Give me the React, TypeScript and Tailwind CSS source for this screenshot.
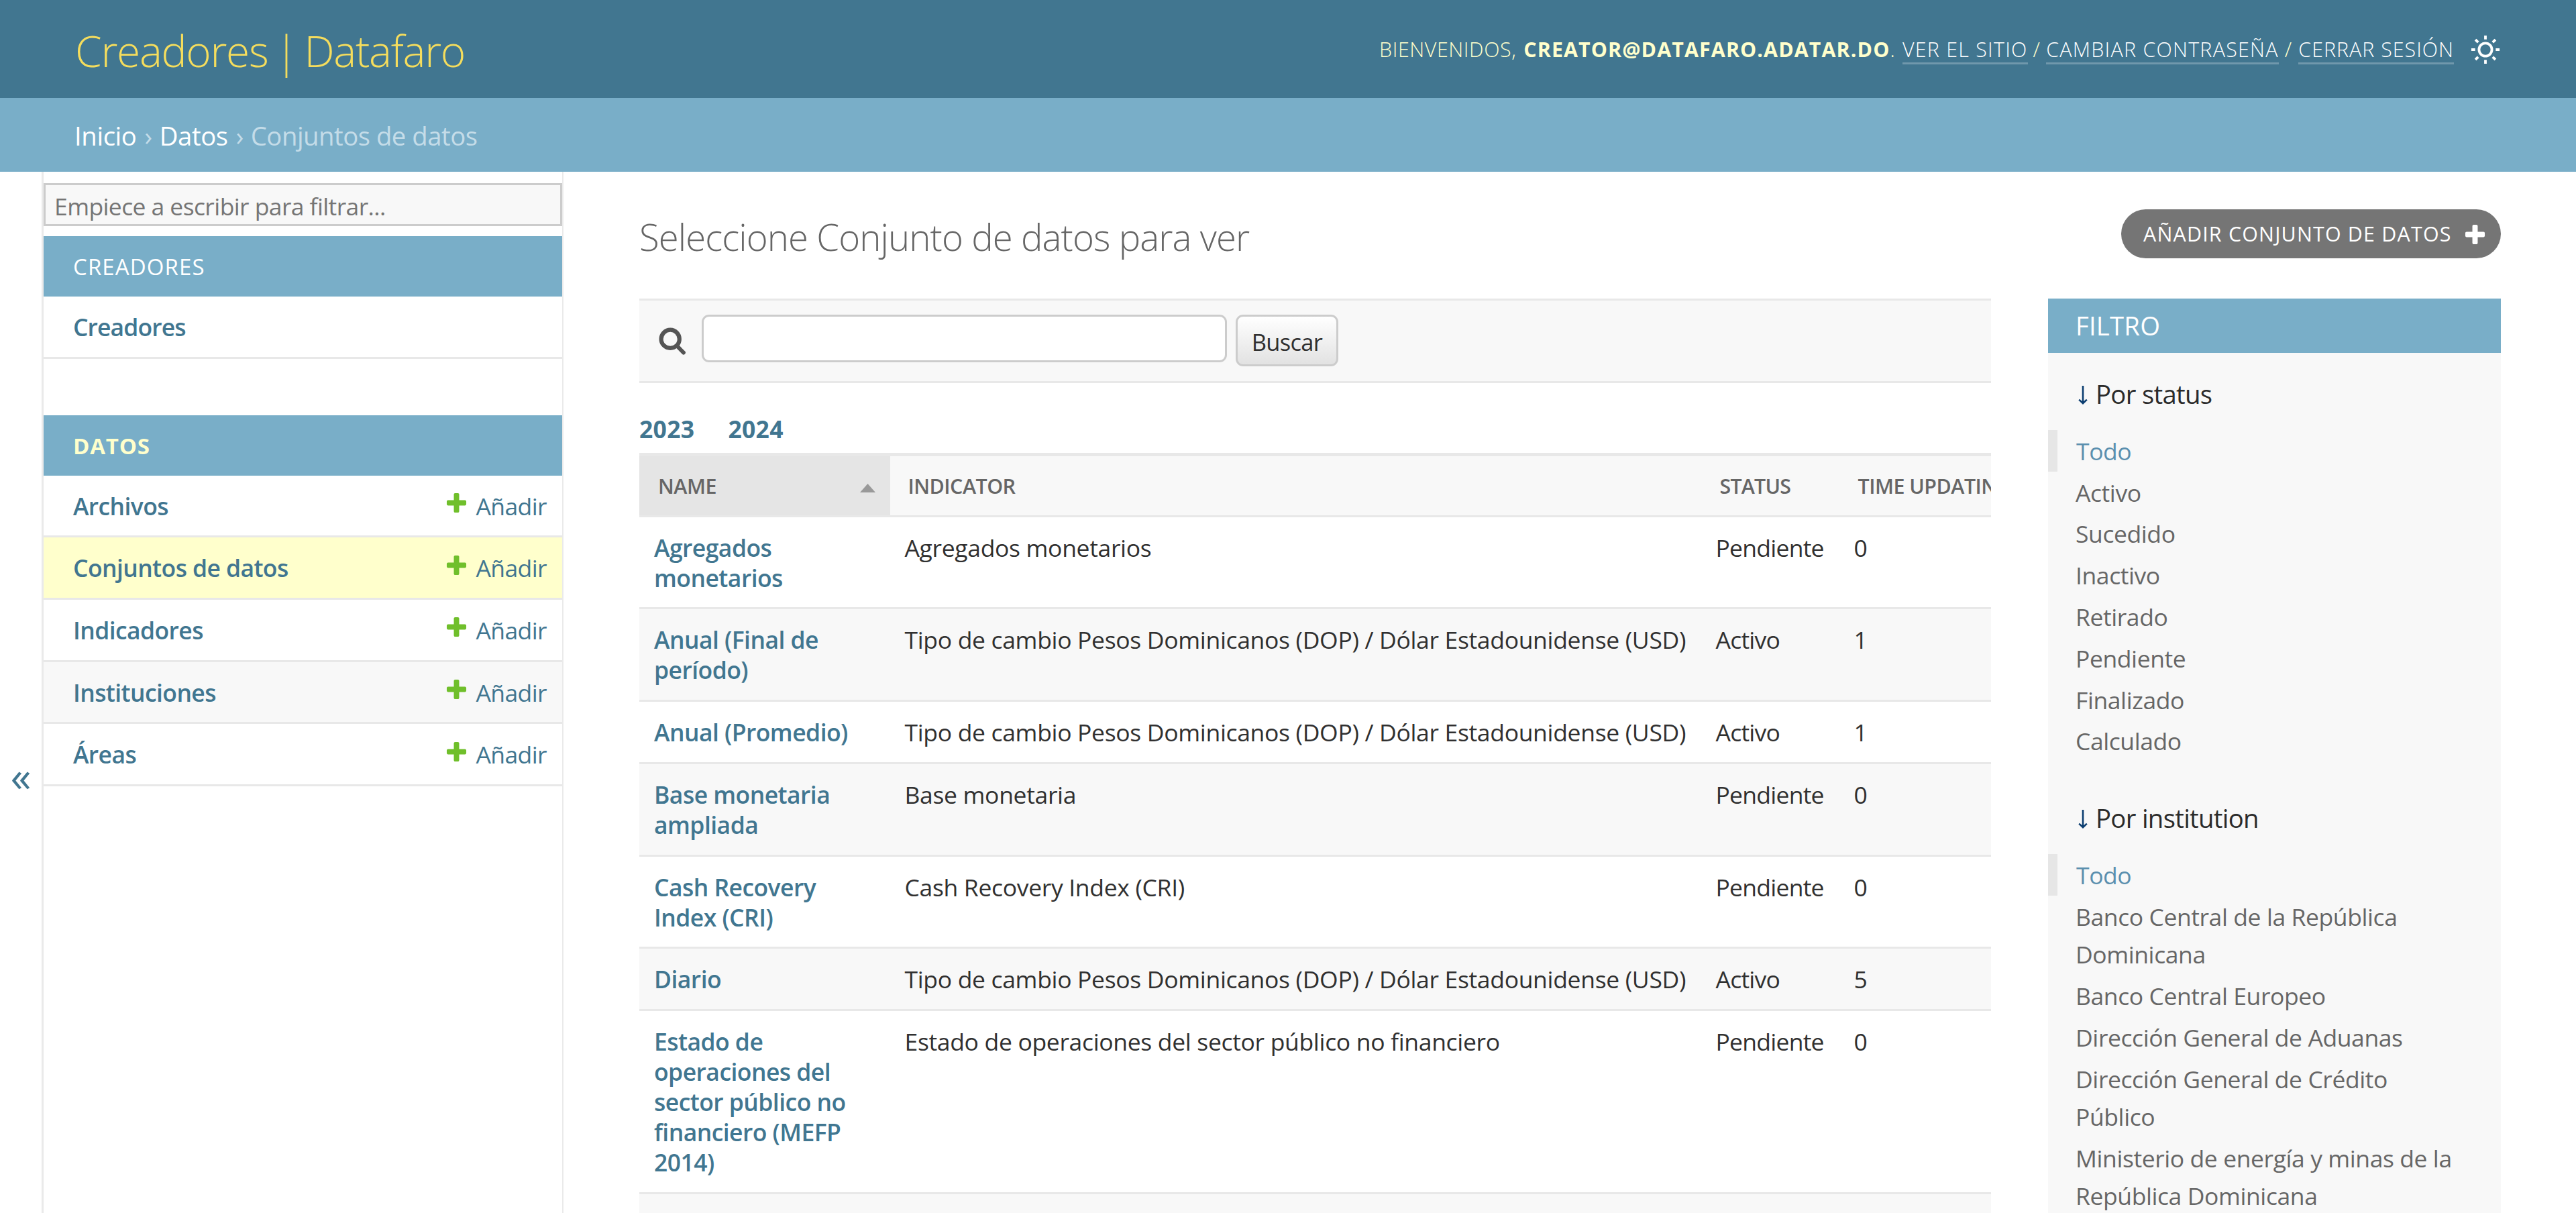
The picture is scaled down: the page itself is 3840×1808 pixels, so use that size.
const models = [
    { name: "Archivos" },
    { name: "Conjuntos de datos", active: true },
    { name: "Indicadores" },
    { name: "Instituciones", striped: true },
    { name: "Áreas" },
]

const tipoCambio = "Tipo de cambio Pesos Dominicanos (DOP) / Dólar Estadounidense (USD)"

const rows = [
    { name: "Agregados monetarios", indicator: "Agregados monetarios", status: "Pendiente", time: 0 },
    { name: "Anual (Final de período)", indicator: tipoCambio, status: "Activo", time: 1 },
    { name: "Anual (Promedio)", indicator: tipoCambio, status: "Activo", time: 1 },
    { name: "Base monetaria ampliada", indicator: "Base monetaria", status: "Pendiente", time: 0 },
    { name: "Cash Recovery Index (CRI)", indicator: "Cash Recovery Index (CRI)", status: "Pendiente", time: 0 },
    { name: "Diario", indicator: tipoCambio, status: "Activo", time: 5 },
    {
        name: "Estado de operaciones del sector público no financiero (MEFP 2014)",
        indicator: "Estado de operaciones del sector público no financiero",
        status: "Pendiente",
        time: 0,
    },
]

const statusOptions = ["Todo", "Activo", "Sucedido", "Inactivo", "Retirado", "Pendiente", "Finalizado", "Calculado"]

const institutionOptions = [
    "Todo",
    "Banco Central de la República Dominicana",
    "Banco Central Europeo",
    "Dirección General de Aduanas",
    "Dirección General de Crédito Público",
    "Ministerio de energía y minas de la República Dominicana",
]

function PlusIcon({ className }: { className: string }) {
    return (
        <svg viewBox="0 0 1792 1792" fill="currentColor" className={className}>
            <path d="M1600 796v192q0 40-28 68t-68 28h-416v416q0 40-28 68t-68 28h-192q-40 0-68-28t-28-68v-416h-416q-40 0-68-28t-28-68v-192q0-40 28-68t68-28h416v-416q0-40 28-68t68-28h192q40 0 68 28t28 68v416h416q40 0 68 28t28 68z" />
        </svg>
    )
}

function SunIcon() {
    return (
        <svg viewBox="0 0 24 24" fill="currentColor" className="ml-[24px] size-[46px]">
            <path d="M12 18a6 6 0 1 1 0-12 6 6 0 0 1 0 12zm0-2a4 4 0 1 0 0-8 4 4 0 0 0 0 8zM11 1h2v3h-2V1zm0 19h2v3h-2v-3zM3.515 4.929l1.414-1.414L7.05 5.636 5.636 7.05 3.515 4.93zM16.95 18.364l1.414-1.414 2.121 2.121-1.414 1.414-2.121-2.121zm2.121-14.85l1.414 1.415-2.121 2.121-1.414-1.414 2.121-2.121zM5.636 16.95l1.414 1.414-2.121 2.121-1.414-1.414 2.121-2.121zM23 11v2h-3v-2h3zM4 11v2H1v-2h3z" />
        </svg>
    )
}

function SearchIcon() {
    return (
        <svg viewBox="0 0 43 43" fill="none" stroke="#555" strokeLinecap="round" className="mt-[18px] size-[43px]">
            <circle cx="18.2" cy="18.3" r="13.6" strokeWidth="6.2" />
            <path d="M29 29.4l9 9.2" strokeWidth="5.8" />
        </svg>
    )
}

function FilterGroup({ title, options }: { title: string; options: string[] }) {
    return (
        <div className="pb-[23px]">
            <h3 className="mb-[26px] flex items-center pt-[33px] pl-[45px] text-[38.3px] leading-[56px] tracking-[-0.7px] text-[#2b2b2b]">
                <svg viewBox="0 0 14 28" fill="none" stroke="#0b3d70" strokeWidth="2.6" className="mt-[3px] mr-[12px] h-[28px] w-[14px]">
                    <path d="M7 0v25.5M1.2 20.6L7 26.2l5.8-5.6" />
                </svg>
                {title}
            </h3>
            <ul>
                {options.map((option, i) => (
                    <li
                        key={option}
                        className={
                            i === 0
                                ? "border-l-[14px] border-[#e6e6e6] py-[2.8px] pr-[60px] pl-[28px] text-[#5b8fae]"
                                : "py-[2.8px] pr-[60px] pl-[41px] text-[#666]"
                        }
                    >
                        <a className="block leading-[56.2px] tracking-[-0.42px]">{option}</a>
                    </li>
                ))}
            </ul>
        </div>
    )
}

export default function App() {
    return (
        <div className="flex h-[1808px] w-[3840px] flex-col overflow-hidden bg-white font-['Open_Sans','Noto_Sans',sans-serif] text-[35.5px] text-[#303030]">
            <header className="flex h-[146px] shrink-0 items-center justify-between bg-[#417690] pr-[112px] pl-[112px] text-[#ffc]">
                <h1 className="pt-[6px] text-[64px] leading-[80px] font-light tracking-[-1.3px] [word-spacing:-5px] text-[#f5dd5d]">
                    Creadores | Datafaro
                </h1>
                <div className="flex items-center pt-[2px] text-[30.4px] leading-[38px] font-light tracking-[1.25px]">
                    <span className="tracking-[0.6px]">BIENVENIDOS,</span>
                    <strong className="ml-[11px] font-bold tracking-[1.1px]">CREATOR@DATAFARO.ADATAR.DO</strong>
                    <span>.</span>
                    <a className="ml-[10px] border-b-[3px] border-white/25 pt-[3px] text-white">VER EL SITIO</a>
                    <span className="mx-[8px]">/</span>
                    <a className="border-b-[3px] border-white/25 pt-[3px] text-white">CAMBIAR CONTRASEÑA</a>
                    <span className="mx-[9px]">/</span>
                    <a className="border-b-[3px] border-white/25 pt-[3px] tracking-[1px] text-white">CERRAR SESIÓN</a>
                    <span className="text-white"><SunIcon /></span>
                </div>
            </header>

            <nav className="flex h-[110px] shrink-0 items-center bg-[#79aec8] pt-[3px] pl-[111px] text-[38.3px] tracking-[-0.4px] text-[#c4dce8]">
                <a className="text-white">Inicio</a>
                <span className="mr-[11px] ml-[12px]">›</span>
                <a className="text-white">Datos</a>
                <span className="mr-[11px] ml-[12px]">›</span>
                <span className="tracking-[-0.5px]">Conjuntos de datos</span>
            </nav>

            <div className="flex h-[1808px] shrink-0">
                <button className="flex w-[62px] items-center justify-center pb-[8px] text-[62px] text-[#417690]">«</button>

                <aside className="w-[778px] border-r-2 border-l-[3px] border-[#eaeaea] pt-[17px]">
                    <input
                        placeholder="Empiece a escribir para filtrar..."
                        className="mb-[15px] block h-[64px] w-full border-[3px] border-[#ccc] bg-[#f8f8f8] px-[13px] pt-[4px] tracking-[-0.6px] placeholder:text-[#757575]"
                    />
                    <h2 className="flex h-[90px] items-center bg-[#79aec8] pt-[2px] pl-[44px] text-[33px] tracking-[1.1px] text-white">CREADORES</h2>
                    <div className="mb-[84px] flex h-[92.5px] items-center border-b-[3px] border-[#e8e8e8] pt-[2px] pl-[44px] font-semibold tracking-[-0.9px] text-[#417690]">
                        Creadores
                    </div>
                    <h2 className="flex h-[90px] items-center bg-[#79aec8] pt-[2px] pl-[44px] text-[33px] font-bold tracking-[0.8px] text-[#ffc]">DATOS</h2>
                    {models.map((model) => (
                        <div
                            key={model.name}
                            className={`flex h-[92.7px] items-center justify-between border-b-[3px] border-[#e8e8e8] pt-[2px] pr-[23px] pl-[44px] tracking-[-0.6px] text-[#417690] ${
                                model.active ? "bg-[#ffc]" : model.striped ? "bg-[#f8f8f8]" : "bg-white"
                            }`}
                        >
                            <a className="font-semibold">{model.name}</a>
                            <a className="flex items-center gap-[10px]">
                                <PlusIcon className="mb-[10px] size-[37px] text-[#70bf2b]" />
                                Añadir
                            </a>
                        </div>
                    ))}
                </aside>

                <main className="ml-[113px] w-[2775px]">
                    <div className="flex h-[189px] items-start justify-between">
                        <h1 className="mt-[65px] text-[54.5px] leading-[64px] font-light tracking-[-0.9px] text-[#666]">
                            Seleccione Conjunto de datos para ver
                        </h1>
                        <a className="mt-[56px] flex h-[73px] w-[566px] items-center justify-between rounded-full bg-[#757575] pt-px pr-[20px] pl-[33px] text-[30.4px] tracking-[1.2px] text-white">
                            AÑADIR CONJUNTO DE DATOS
                            <PlusIcon className="size-[37px]" />
                        </a>
                    </div>

                    <div className="flex items-stretch gap-[85px]">
                        <section className="h-[1600px] w-[2015px] shrink-0 overflow-hidden">
                            <div className="flex h-[126px] items-start border-y-[3px] border-[#e8e8e8] bg-[#f8f8f8] pt-[21px] pl-[28px]">
                                <SearchIcon />
                                <input className="ml-[22px] h-[71px] w-[783px] rounded-[11px] border-[3px] border-[#ccc] bg-white" />
                                <button className="ml-[13px] h-[77px] w-[153px] rounded-[11px] border-[3px] border-[#ccc] bg-gradient-to-b from-white to-[#e2e2e2] pt-[4px] text-[34.5px] tracking-[-0.7px]">
                                    Buscar
                                </button>
                            </div>

                            <div className="flex h-[104px] gap-[50px] pt-[45px] leading-[46px] font-bold tracking-[0.3px] text-[#417690]">
                                <a>2023</a>
                                <a>2024</a>
                            </div>

                            <div className="flex h-[95.5px] w-[2400px] border-t-[5px] border-b-[3px] border-[#e8e8e8] bg-[#f8f8f8] text-[30.4px] font-semibold tracking-[-0.5px] text-[#666]">
                                <div className="flex w-[373.5px] items-center justify-between bg-[#e5e5e5] pt-[2px] pr-[22px] pl-[28px]">
                                    NAME
                                    <svg viewBox="0 0 23 13" fill="#999" className="mt-[6px] h-[13px] w-[23px]">
                                        <path d="M11.5 0L23 13H0z" />
                                    </svg>
                                </div>
                                <div className="flex w-[1210px] items-center pt-[2px] pl-[27px]">INDICATOR</div>
                                <div className="flex w-[206px] items-center pt-[2px] pl-[27px] tracking-[-0.8px]">STATUS</div>
                                <div className="flex items-center pt-[2px] pl-[27px] whitespace-nowrap">TIME UPDATING</div>
                            </div>

                            {rows.map((row, i) => (
                                <div
                                    key={row.name}
                                    className={`flex border-b-[3px] border-[#e8e8e8] pt-[23px] pb-[21.75px] leading-[45px] tracking-[-0.33px] ${
                                        i % 2 ? "bg-[#f8f8f8]" : "bg-white"
                                    }`}
                                >
                                    <a className="w-[373.5px] px-[22px] font-semibold tracking-[-0.55px] text-[#417690]">{row.name}</a>
                                    <span className="w-[1210px] pl-[22px]">{row.indicator}</span>
                                    <span className="w-[206px] pl-[21px] tracking-[-0.75px]">{row.status}</span>
                                    <span className="pl-[21px]">{row.time}</span>
                                </div>
                            ))}
                            <div className="h-[93px] bg-[#f8f8f8]" />
                        </section>

                        <section className="w-[675px] shrink-0 bg-[#f8f8f8]">
                            <h2 className="flex h-[81px] items-center bg-[#79aec8] pt-px pl-[41px] text-[38.3px] tracking-[0.2px] text-white">FILTRO</h2>
                            <FilterGroup title="Por status" options={statusOptions} />
                            <FilterGroup title="Por institution" options={institutionOptions} />
                        </section>
                    </div>
                </main>
            </div>
        </div>
    )
}
